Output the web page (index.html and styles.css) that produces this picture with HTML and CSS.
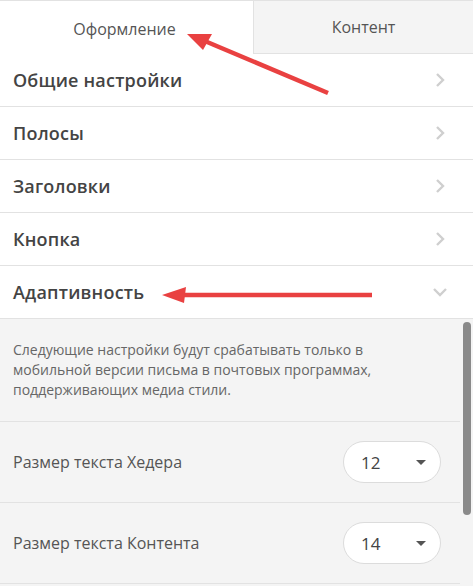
FILE: index.html
```
<!DOCTYPE html>
<html lang="ru">
<head>
    <meta charset="UTF-8" />
    <meta name="viewport" content="width=device-width, initial-scale=1.0" />
    <title>Настройки письма</title>
    <link rel="stylesheet" href="styles.css">
</head>
<body>
    <div class="editor">
        <div class="tabs">
            <div class="tab active">Оформление</div>
            <div class="tab">Контент</div>
        </div>

        <div class="acc-row">
            <span>Общие настройки</span>
            <svg class="chev" width="10" height="16" viewBox="0 0 10 16"><path d="M2 2l6 6-6 6" /></svg>
        </div>
        <div class="acc-row">
            <span>Полосы</span>
            <svg class="chev" width="10" height="16" viewBox="0 0 10 16"><path d="M2 2l6 6-6 6" /></svg>
        </div>
        <div class="acc-row">
            <span>Заголовки</span>
            <svg class="chev" width="10" height="16" viewBox="0 0 10 16"><path d="M2 2l6 6-6 6" /></svg>
        </div>
        <div class="acc-row">
            <span>Кнопка</span>
            <svg class="chev" width="10" height="16" viewBox="0 0 10 16"><path d="M2 2l6 6-6 6" /></svg>
        </div>
        <div class="acc-row open">
            <span>Адаптивность</span>
            <svg class="chev down" width="16" height="10" viewBox="0 0 16 10"><path d="M2 2l6 6 6-6" /></svg>
        </div>

        <div class="panel">
            <div class="panel-inner">
                <p class="note">Следующие настройки будут срабатывать только в мобильной версии письма в почтовых программах, поддерживающих медиа стили.</p>

                <div class="setting">
                    <span>Размер текста Хедера</span>
                    <div class="select">12 <i class="caret"></i></div>
                </div>
                <div class="setting">
                    <span>Размер текста Контента</span>
                    <div class="select">14 <i class="caret"></i></div>
                </div>
            </div>
            <div class="scroll-thumb"></div>
        </div>

        <!-- annotation arrows -->
        <svg class="arrows" width="473" height="586" viewBox="0 0 473 586">
            <line x1="328" y1="93" x2="200" y2="39" />
            <polygon points="187,34 212,34 203,50" />
            <line x1="372" y1="295" x2="178" y2="295" />
            <polygon points="162,295 186,287 184,303" />
        </svg>
    </div>
</body>
</html>
```

FILE: styles.css
```
body {
    margin: 0;
    font-family: "Open Sans", Arial, sans-serif;
    background: #fff;
    color: #444;
    overflow: hidden;
}

.editor {
    position: relative;
    width: 473px;
    height: 586px;
    border-top: 1px solid #e2e2e2;
    box-sizing: border-box;
}

.tabs {
    display: flex;
    height: 53px;
}

.tab {
    flex: 1;
    display: flex;
    align-items: center;
    justify-content: center;
    font-size: 16px;
    color: #555;
    background: #f4f4f4;
    border-left: 1px solid #e2e2e2;
    border-bottom: 1px solid #e2e2e2;
}

    .tab.active {
        flex: 0 0 253px;
        background: #fff;
        border: none;
        padding: 3px 4px 0 0;
        box-sizing: border-box;
    }

.acc-row {
    display: flex;
    align-items: center;
    justify-content: space-between;
    height: 53px;
    box-sizing: border-box;
    padding: 0 28px 0 13px;
    border-bottom: 1px solid #e2e2e2;
    font-size: 18px;
    font-weight: 600;
    letter-spacing: 0.2px;
    color: #444;
}

.chev path {
    fill: none;
    stroke: #cfcfcf;
    stroke-width: 2.4;
}

.chev.down {
    margin-right: -3px;
}

.panel {
    position: relative;
    background: #f4f4f4;
    height: 267px;
    overflow: hidden;
}

.panel-inner {
    width: 460px;
}

.note {
    margin: 0;
    padding: 21px 30px 21px 13px;
    font-size: 14px;
    line-height: 20px;
    color: #666;
    border-bottom: 1px solid #e2e2e2;
}

.setting {
    display: flex;
    align-items: center;
    justify-content: space-between;
    height: 80px;
    padding: 0 19px 0 13px;
    border-bottom: 1px solid #e2e2e2;
    font-size: 16px;
    color: #555;
}

.select {
    width: 98px;
    height: 42px;
    box-sizing: border-box;
    background: #fff;
    border: 1px solid #dcdcdc;
    border-radius: 21px;
    display: flex;
    align-items: center;
    justify-content: space-between;
    padding: 0 14px 0 17px;
    font-size: 17px;
    color: #444;
}

.caret {
    width: 0;
    height: 0;
    border-left: 5px solid transparent;
    border-right: 5px solid transparent;
    border-top: 5px solid #555;
}

.scroll-thumb {
    position: absolute;
    top: 3px;
    right: 2px;
    width: 8px;
    height: 193px;
    border-radius: 4px;
    background: #8a8a8a;
}

.arrows {
    position: absolute;
    top: -1px;
    left: 0;
    pointer-events: none;
}

    .arrows line {
        stroke: #e94141;
        stroke-width: 4.5;
    }

    .arrows polygon {
        fill: #e94141;
    }
```
